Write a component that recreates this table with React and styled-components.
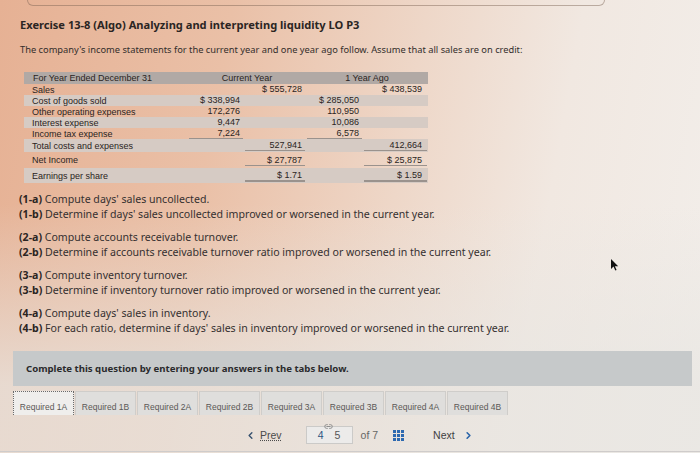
import React from "react";
import styled, { createGlobalStyle } from "styled-components";
import { ChevronLeft, ChevronRight, Link2 } from "lucide-react";

const GlobalStyle = createGlobalStyle`
  html, body {
    margin: 0;
    padding: 0;
  }
  body {
    font-family: "Noto Sans", "Liberation Sans", sans-serif;
    color: #3a3331;
  }
`;

const rows = [
  { label: "Sales", cells: ["", "$ 555,728", "", "$ 438,539"] },
  { label: "Cost of goods sold", cells: ["$ 338,994", "", "$ 285,050", ""], shade: true },
  { label: "Other operating expenses", cells: ["172,276", "", "110,950", ""] },
  { label: "Interest expense", cells: ["9,447", "", "10,086", ""], shade: true },
  { label: "Income tax expense", cells: ["7,224", "", "6,578", ""], rule: [1, 0, 1, 0] },
  { label: "Total costs and expenses", cells: ["", "527,941", "", "412,664"], shade: true, rule: [0, 1, 0, 1], h: 13 },
  { label: "Net Income", cells: ["", "$ 27,787", "", "$ 25,875"], rule: [0, 1, 0, 1], h: 16 },
  { label: "Earnings per share", cells: ["", "$ 1.71", "", "$ 1.59"], shade: true, rule: [0, 2, 0, 2], h: 15 },
];

const questions = [
  [
    ["(1-a)", "Compute days' sales uncollected."],
    ["(1-b)", "Determine if days' sales uncollected improved or worsened in the current year."],
  ],
  [
    ["(2-a)", "Compute accounts receivable turnover."],
    ["(2-b)", "Determine if accounts receivable turnover ratio improved or worsened in the current year."],
  ],
  [
    ["(3-a)", "Compute inventory turnover."],
    ["(3-b)", "Determine if inventory turnover ratio improved or worsened in the current year."],
  ],
  [
    ["(4-a)", "Compute days' sales in inventory."],
    ["(4-b)", "For each ratio, determine if days' sales in inventory improved or worsened in the current year."],
  ],
];

const tabs = ["1A", "1B", "2A", "2B", "3A", "3B", "4A", "4B"];

const App = () => {
  return (
    <>
      <GlobalStyle />
      <Page>
        <TopCard />
        <Title>Exercise 13-8 (Algo) Analyzing and interpreting liquidity LO P3</Title>
        <Intro>
          The company's income statements for the current year and one year ago follow. Assume that all sales are on credit:
        </Intro>

        <Statement>
          <HeadRow>
            <HeadLabel>For Year Ended December 31</HeadLabel>
            <HeadSpan>Current Year</HeadSpan>
            <HeadSpan>1 Year Ago</HeadSpan>
          </HeadRow>
          {rows.map((r) => (
            <Row key={r.label} $shade={r.shade} $h={r.h}>
              <Label>{r.label}</Label>
              {r.cells.map((c, i) => (
                <Num key={i} $rule={r.rule ? r.rule[i] : 0} $last={i === 3}>
                  {c}
                </Num>
              ))}
            </Row>
          ))}
        </Statement>

        <Questions>
          {questions.map((group, gi) => (
            <Group key={gi}>
              {group.map(([tag, text]) => (
                <Line key={tag}>
                  <b>{tag}</b> {text}
                </Line>
              ))}
            </Group>
          ))}
        </Questions>

        <Banner>Complete this question by entering your answers in the tabs below.</Banner>

        <Tabs>
          {tabs.map((t, i) => (
            <Tab key={t} $active={i === 0}>
              Required {t}
            </Tab>
          ))}
        </Tabs>

        <Pager>
          <PrevLink>
            <ChevronLeft size={11} strokeWidth={3} color="#35506e" />
            <u>Prev</u>
          </PrevLink>
          <PageBox>
            <Chain>
              <Link2 size={9} strokeWidth={2.5} color="#8a8a8a" />
            </Chain>
            <PageNum $current>4</PageNum>
            <PageNum>5</PageNum>
          </PageBox>
          <OfText>of 7</OfText>
          <GridIcon>
            {Array.from({ length: 9 }).map((_, i) => (
              <span key={i} />
            ))}
          </GridIcon>
          <NextLink>
            Next
            <ChevronRight size={11} strokeWidth={3.5} color="#2a64a8" />
          </NextLink>
        </Pager>

        <Cursor width="8" height="12" viewBox="0 0 8 12">
          <path d="M0 0 L0 10 L2.5 7.6 L4.3 11.5 L5.6 10.9 L3.9 7.2 L7.2 7.2 Z" fill="#111" />
        </Cursor>
      </Page>
    </>
  );
};

export default App;

const Page = styled.div`
  position: relative;
  width: 700px;
  height: 453px;
  overflow: hidden;
  box-sizing: border-box;
  background:
    linear-gradient(180deg, rgba(236, 234, 230, 0) 45%, rgba(232, 230, 226, 0.75) 85%),
    linear-gradient(100deg, #e6b194 0%, #eac0a7 30%, #eed7c8 55%, #f1e8e1 75%, #f2eeea 100%);
  display: flex;
  flex-direction: column;
`;

const TopCard = styled.div`
  height: 5px;
  margin: 0 95px 0 27px;
  border: 1px solid rgba(120, 95, 80, 0.45);
  border-top: none;
  border-radius: 0 0 6px 6px;
`;

const Title = styled.div`
  margin: 12px 0 0 20px;
  font-size: 11.1px;
  line-height: 14px;
  font-weight: 700;
  font-stretch: extra-condensed;
  color: #2b2523;
`;

const Intro = styled.div`
  margin: 11px 0 0 20px;
  font-size: 9.3px;
  line-height: 14px;
  font-stretch: extra-condensed;
  color: #332d2b;
`;

const Statement = styled.div`
  margin: 15px 0 0 24px;
  width: 404px;
  font-family: "Liberation Sans", Arial, sans-serif;
  font-size: 9px;
  color: #2a2422;
`;

const HeadRow = styled.div`
  display: grid;
  grid-template-columns: 164px 118px 122px;
  height: 12px;
  line-height: 12px;
  background: #b1a9a5;
`;

const HeadLabel = styled.div`
  padding-left: 9px;
`;

const HeadSpan = styled.div`
  text-align: center;
`;

const Row = styled.div`
  display: grid;
  grid-template-columns: 164px 56px 62px 57px 65px;
  height: ${(p) => p.$h || 11}px;
  align-items: center;
  background: ${(p) => (p.$shade ? "#d6cbc4" : "transparent")};
`;

const Label = styled.div`
  padding-left: 8px;
  line-height: 10px;
`;

const Num = styled.div`
  margin: 0 1px;
  padding-right: ${(p) => (p.$last ? 5 : 3)}px;
  text-align: right;
  line-height: 10px;
  border-bottom: ${(p) =>
    p.$rule === 2 ? "2px solid #9a928d" : p.$rule === 1 ? "1px solid #9a928d" : "1px solid transparent"};
`;

const Questions = styled.div`
  margin: 9px 0 0 19px;
  font-size: 10.6px;
  font-stretch: extra-condensed;
  color: #353030;
  b {
    font-weight: 700;
    color: #2b2523;
  }
`;

const Group = styled.div`
  & + & {
    margin-top: 8px;
  }
`;

const Line = styled.div`
  line-height: 15px;
  white-space: nowrap;
`;

const Banner = styled.div`
  margin: 15px 8px 0 13px;
  height: 35px;
  display: flex;
  align-items: center;
  padding-left: 13px;
  background: #c6c9ca;
  font-size: 9.6px;
  font-weight: 700;
  font-stretch: extra-condensed;
  color: #2a2a2c;
`;

const Tabs = styled.div`
  display: flex;
  margin: 5px 0 0 13px;
  height: 24px;
`;

const Tab = styled.div`
  width: 61px;
  margin-right: 1px;
  box-sizing: border-box;
  display: flex;
  align-items: flex-end;
  justify-content: center;
  padding-bottom: 3px;
  font-family: "Liberation Sans", Arial, sans-serif;
  font-size: 8.5px;
  color: #5a5856;
  background: ${(p) => (p.$active ? "#efeeec" : "#dfdedc")};
  border: ${(p) => (p.$active ? "1px dotted #6a6a6a" : "1px solid #cfcdca")};
  border-bottom: none;
`;

const Pager = styled.div`
  display: flex;
  align-items: center;
  height: 20px;
  margin: 10px 0 0 0;
  padding: 0 0 6px 245px;
  border-bottom: 1px solid #cfcccb;
  font-family: "Liberation Sans", Arial, sans-serif;
  font-size: 10.5px;
  color: #4b4b4b;
`;

const PrevLink = styled.div`
  display: flex;
  align-items: center;
  gap: 4px;
  u {
    text-decoration-style: dotted;
  }
`;

const PageBox = styled.div`
  position: relative;
  margin-left: 24px;
  width: 47px;
  height: 18px;
  box-sizing: border-box;
  border: 1px solid #cbcac8;
  background: #ecebea;
  display: flex;
  align-items: center;
  justify-content: center;
  gap: 11px;
`;

const Chain = styled.div`
  position: absolute;
  top: -5px;
  left: 17px;
  line-height: 0;
`;

const PageNum = styled.span`
  color: ${(p) => (p.$current ? "#2c5682" : "#555")};
`;

const OfText = styled.span`
  margin-left: 8px;
  color: #666;
`;

const GridIcon = styled.div`
  margin-left: 15px;
  display: grid;
  grid-template-columns: repeat(3, 3px);
  grid-auto-rows: 3px;
  gap: 1px;
  span {
    background: #2d69b0;
  }
`;

const NextLink = styled.div`
  margin-left: 29px;
  display: flex;
  align-items: center;
  gap: 8px;
  color: #3f3f3f;
`;

const Cursor = styled.svg`
  position: absolute;
  left: 611px;
  top: 259px;
`;
